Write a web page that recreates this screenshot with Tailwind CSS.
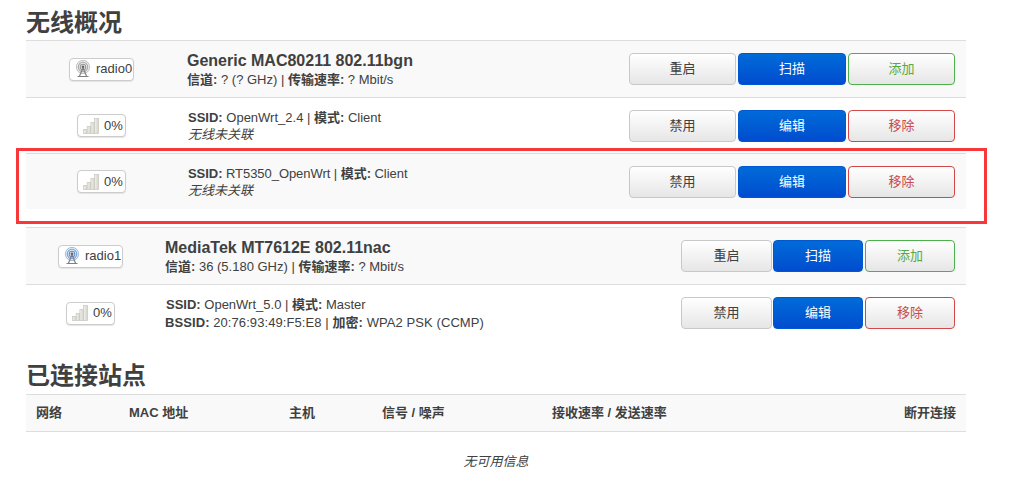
<!DOCTYPE html>
<html lang="zh-CN">
<head>
    <meta charset="UTF-8">
    <title>无线概况</title>
    <script src="https://cdn.jsdelivr.net/npm/@tailwindcss/browser@4"></script>
</head>
<body class="bg-white text-[#404040] font-['Liberation_Sans','Noto_Sans_CJK_SC',sans-serif]">
    <div class="relative w-[1030px] h-[485px] overflow-hidden pl-[26px]">
        <svg width="0" height="0" class="absolute">
            <defs>
                <linearGradient id="bar" x1="0" y1="0" x2="1" y2="0">
                    <stop offset="0" stop-color="#f2f2ec"/>
                    <stop offset="1" stop-color="#d2d2ca"/>
                </linearGradient>
                <symbol id="signal" viewBox="0 0 16 16">
                    <g stroke="#c6c6be" stroke-width=".7" fill="url(#bar)">
                        <rect x="0.5" y="11.5" width="3.7" height="4"/>
                        <rect x="4.2" y="8.5" width="3.7" height="7"/>
                        <rect x="7.9" y="4.5" width="3.7" height="11"/>
                        <rect x="11.6" y="0.5" width="3.9" height="15"/>
                    </g>
                </symbol>
                <symbol id="radio" viewBox="0 0 16 18" fill="none">
                    <circle cx="8" cy="7" r="7.2" fill="currentColor" opacity=".14"/>
                    <circle cx="8" cy="7" r="6.6" stroke="currentColor" stroke-width="1" opacity=".45"/>
                    <circle cx="8" cy="7" r="4.7" stroke="currentColor" stroke-width="1.1" opacity=".7"/>
                    <circle cx="8" cy="7" r="2.8" stroke="currentColor" stroke-width="1.1" opacity=".9"/>
                    <circle cx="8" cy="7" r="1.4" fill="#666"/>
                    <path d="M8 8 4.5 16M8 8l3.5 8M2.5 16.5h11" stroke="#808080" stroke-width="1.2"/>
                </symbol>
            </defs>
        </svg>

        <h2 class="h-[40px] text-[24px] leading-[46px] font-bold">无线概况</h2>

        <!-- radio0 -->
        <div class="w-[940px] border-t border-[#ddd]">
            <div class="flex items-center h-[57px] bg-[#f9f9f9] border-b border-[#ddd]">
                <div class="w-[151px] flex justify-center">
                    <span class="flex items-center h-[23px] w-[65px] pl-[5px] gap-[5px] bg-white border border-[#ccc] rounded-[4px] shadow-[0_1px_1px_#e4e4e4] text-[13px]">
                        <svg class="w-[16px] h-[18px] shrink-0 text-[#8c8c8c]"><use href="#radio"/></svg>radio0
                    </span>
                </div>
                <div class="flex-1 ml-[10px]">
                    <div class="text-[16px] leading-[20px] font-bold">Generic MAC80211 802.11bgn</div>
                    <div class="text-[13px] leading-[17px]"><b>信道:</b> ? (? GHz) | <b>传输速率:</b> ? Mbit/s</div>
                </div>
                <div class="flex gap-[2px] mr-[11px] text-[13px]">
                    <button class="w-[107px] h-[32px] rounded-[4px] border border-[#c8c8c8] bg-gradient-to-b from-white to-[#e6e6e6]">重启</button>
                    <button class="w-[108px] h-[32px] rounded-[4px] border border-[#0058d0] bg-gradient-to-b from-[#006bd8] to-[#004ccf] text-white">扫描</button>
                    <button class="w-[107px] h-[32px] rounded-[4px] border border-[#4cb14a] bg-gradient-to-b from-white to-[#e6e6e6] text-[#5aa93f]">添加</button>
                </div>
            </div>
            <div class="flex items-center h-[56px] border-b border-[#ddd]">
                <div class="w-[151px] flex justify-center">
                    <span class="flex items-center h-[23px] w-[49px] pl-[5px] gap-[5px] bg-white border border-[#ccc] rounded-[4px] shadow-[0_1px_1px_#e4e4e4] text-[13px]">
                        <svg class="w-[16px] h-[16px] shrink-0"><use href="#signal"/></svg>0%
                    </span>
                </div>
                <div class="flex-1 ml-[11px] pt-[1px]">
                    <div class="text-[13px] leading-[17px]"><b>SSID:</b> OpenWrt_2.4 | <b>模式:</b> Client</div>
                    <div class="text-[13px] leading-[18px] italic">无线未关联</div>
                </div>
                <div class="flex gap-[2px] mr-[11px] text-[13px]">
                    <button class="w-[107px] h-[32px] rounded-[4px] border border-[#c8c8c8] bg-gradient-to-b from-white to-[#e6e6e6]">禁用</button>
                    <button class="w-[108px] h-[32px] rounded-[4px] border border-[#0058d0] bg-gradient-to-b from-[#006bd8] to-[#004ccf] text-white">编辑</button>
                    <button class="w-[107px] h-[32px] rounded-[4px] border border-[#d04848] bg-gradient-to-b from-white to-[#e6e6e6] text-[#c94a4a]">移除</button>
                </div>
            </div>
            <div class="flex items-center h-[55px] bg-[#f9f9f9]">
                <div class="w-[151px] flex justify-center">
                    <span class="flex items-center h-[23px] w-[49px] pl-[5px] gap-[5px] bg-white border border-[#ccc] rounded-[4px] shadow-[0_1px_1px_#e4e4e4] text-[13px]">
                        <svg class="w-[16px] h-[16px] shrink-0"><use href="#signal"/></svg>0%
                    </span>
                </div>
                <div class="flex-1 ml-[11px] pt-[1px]">
                    <div class="text-[13px] leading-[17px] tracking-[-0.05px]"><b>SSID:</b> RT5350_OpenWrt | <b>模式:</b> Client</div>
                    <div class="text-[13px] leading-[18px] italic">无线未关联</div>
                </div>
                <div class="flex gap-[2px] mr-[11px] text-[13px]">
                    <button class="w-[107px] h-[32px] rounded-[4px] border border-[#c8c8c8] bg-gradient-to-b from-white to-[#e6e6e6]">禁用</button>
                    <button class="w-[108px] h-[32px] rounded-[4px] border border-[#0058d0] bg-gradient-to-b from-[#006bd8] to-[#004ccf] text-white">编辑</button>
                    <button class="w-[107px] h-[32px] rounded-[4px] border border-[#d04848] bg-gradient-to-b from-white to-[#e6e6e6] text-[#c94a4a]">移除</button>
                </div>
            </div>
        </div>

        <!-- radio1 -->
        <div class="w-[940px] mt-[18px] border-t border-[#ddd]">
            <div class="flex items-center h-[57px] bg-[#f9f9f9] border-b border-[#ddd]">
                <div class="w-[129px] flex justify-center">
                    <span class="flex items-center h-[23px] w-[65px] pl-[5px] gap-[5px] bg-white border border-[#ccc] rounded-[4px] shadow-[0_1px_1px_#e4e4e4] text-[13px]">
                        <svg class="w-[16px] h-[18px] shrink-0 text-[#4f86c6]"><use href="#radio"/></svg>radio1
                    </span>
                </div>
                <div class="flex-1 ml-[10px]">
                    <div class="text-[16px] leading-[20px] font-bold">MediaTek MT7612E 802.11nac</div>
                    <div class="text-[13px] leading-[17px]"><b>信道:</b> 36 (5.180 GHz) | <b>传输速率:</b> ? Mbit/s</div>
                </div>
                <div class="flex mr-[11px] text-[13px]">
                    <button class="w-[91px] h-[32px] rounded-[4px] border border-[#c8c8c8] bg-gradient-to-b from-white to-[#e6e6e6]">重启</button>
                    <button class="w-[90px] h-[32px] ml-[1px] rounded-[4px] border border-[#0058d0] bg-gradient-to-b from-[#006bd8] to-[#004ccf] text-white">扫描</button>
                    <button class="w-[90px] h-[32px] ml-[2px] rounded-[4px] border border-[#4cb14a] bg-gradient-to-b from-white to-[#e6e6e6] text-[#5aa93f]">添加</button>
                </div>
            </div>
            <div class="flex items-center h-[56px]">
                <div class="w-[129px] flex justify-center">
                    <span class="flex items-center h-[23px] w-[49px] pl-[5px] gap-[5px] bg-white border border-[#ccc] rounded-[4px] shadow-[0_1px_1px_#e4e4e4] text-[13px]">
                        <svg class="w-[16px] h-[16px] shrink-0"><use href="#signal"/></svg>0%
                    </span>
                </div>
                <div class="flex-1 ml-[11px] pt-[1px]">
                    <div class="text-[13px] leading-[17px]"><b>SSID:</b> OpenWrt_5.0 | <b>模式:</b> Master</div>
                    <div class="text-[13px] leading-[19px] -ml-[1px] tracking-[0.08px]"><b>BSSID:</b> 20:76:93:49:F5:E8 | <b>加密:</b> WPA2 PSK (CCMP)</div>
                </div>
                <div class="flex mr-[11px] text-[13px]">
                    <button class="w-[91px] h-[32px] rounded-[4px] border border-[#c8c8c8] bg-gradient-to-b from-white to-[#e6e6e6]">禁用</button>
                    <button class="w-[90px] h-[32px] ml-[1px] rounded-[4px] border border-[#0058d0] bg-gradient-to-b from-[#006bd8] to-[#004ccf] text-white">编辑</button>
                    <button class="w-[90px] h-[32px] ml-[2px] rounded-[4px] border border-[#d04848] bg-gradient-to-b from-white to-[#e6e6e6] text-[#c94a4a]">移除</button>
                </div>
            </div>
        </div>

        <h2 class="h-[53px] text-[24px] leading-[70px] font-bold">已连接站点</h2>

        <!-- stations -->
        <div class="w-[940px]">
            <div class="flex items-center h-[38px] bg-[#f9f9f9] border-y border-[#ddd] text-[13px] font-bold px-[10px]">
                <span class="w-[93px]">网络</span>
                <span class="w-[160px]">MAC 地址</span>
                <span class="w-[93px]">主机</span>
                <span class="w-[170px]">信号 / 噪声</span>
                <span class="flex-1">接收速率 / 发送速率</span>
                <span>断开连接</span>
            </div>
            <div class="mt-[21px] text-center text-[13px] leading-[18px] italic">无可用信息</div>
        </div>

        <!-- highlight annotation -->
        <div class="absolute left-[16px] top-[148px] w-[971px] h-[76px] border-[3px] border-[#f83838]"></div>
    </div>
</body>
</html>
